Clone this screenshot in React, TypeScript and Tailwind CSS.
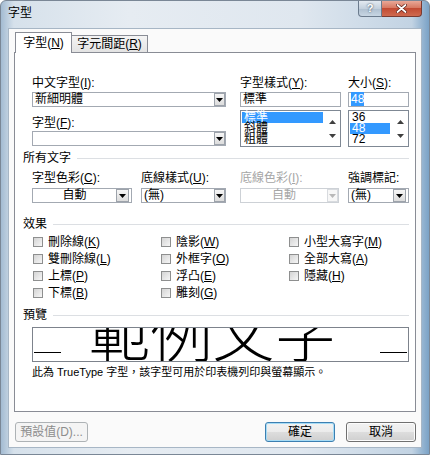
import React from 'react';

const Arrow = ({ color = '#000', up = false }: { color?: string; up?: boolean }) => (
  <svg width="7" height="4" viewBox="0 0 7 4">
    <path d={up ? 'M0 4h7L3.5 0z' : 'M0 0h7L3.5 4z'} fill={color} />
  </svg>
);

const Acc = ({ text, k, colon = true }: { text: string; k?: string; colon?: boolean }) => (
  <span>
    {text}
    {k && (
      <>
        (<span className="underline underline-offset-1">{k}</span>)
      </>
    )}
    {colon ? ':' : ''}
  </span>
);

interface ComboProps {
  value?: React.ReactNode;
  center?: boolean;
  disabled?: boolean;
  wide?: boolean;
  className?: string;
}

const Combo: React.FC<ComboProps> = ({ value, center, disabled, wide, className = '' }) => (
  <div
    className={`flex h-[15px] border bg-white ${
      disabled ? 'border-[#cdd1d6]' : 'border-[#a3a9b2]'
    } ${className}`}
  >
    <div
      className={`flex-1 px-[2px] text-[12px] leading-[13px] whitespace-nowrap ${center ? 'text-center' : ''} ${
        disabled ? 'text-[#a6a6a6]' : 'text-black'
      }`}
    >
      {value}
    </div>
    <div
      className={`${wide ? 'w-[13px] mr-[2px]' : 'w-[11px]'} flex items-center justify-center border ${
        disabled
          ? 'border-[#d8dbdf] bg-[#f7f7f7]'
          : 'border-[#9da3ab] bg-[linear-gradient(180deg,#f6f6f6,#dcdcdc)]'
      }`}
    >
      <Arrow color={disabled ? '#b9b9b9' : '#000'} />
    </div>
  </div>
);

const ListBox = ({ items, selected, itemWidth }: { items: string[]; selected: number; itemWidth: string }) => (
  <div className="mt-[3px] flex h-[37px] border border-[#7f8894] bg-white">
    <div className="flex-1 pt-[1px] pl-[1px]">
      {items.map((it, i) => (
        <div
          key={it}
          className={`${itemWidth} h-[11px] pl-[2px] text-[12px] leading-[11px] ${
            i === selected ? 'bg-[#3399ff] text-white' : 'text-black'
          }`}
        >
          {it}
        </div>
      ))}
    </div>
    <div className="flex w-[16px] flex-col items-center justify-between pt-[9px] pb-[8px]">
      <Arrow color="#404040" up />
      <Arrow color="#404040" />
    </div>
  </div>
);

const Section = ({ title, className = '' }: { title: string; className?: string }) => (
  <div className={`flex items-center gap-[6px] text-[12px] leading-[14px] ${className}`}>
    <span>{title}</span>
    <div className="h-px flex-1 bg-[#dcdfe3]" />
  </div>
);

const Check = ({ label, k }: { label: string; k: string }) => (
  <div className="flex h-[17px] items-center gap-[5px] text-[12px] leading-[14px]">
    <div className="h-[10px] w-[10px] border border-[#8e8f8f] bg-[linear-gradient(135deg,#d4d4d4,#f6f6f6)]" />
    <Acc text={label} k={k} colon={false} />
  </div>
);

export default function App() {
  return (
    <div className="flex h-[455px] w-[430px] flex-col overflow-hidden rounded-t-[6px] border border-[#7a8796] bg-[linear-gradient(90deg,#a3bbd2_0%,#d6e1eb_3%,#e6ecf2_30%,#dfe7ef_70%,#c2d3e3_96%,#7aa2c6_100%)] font-['Liberation_Sans','Noto_Sans_CJK_TC',sans-serif] text-black">
      {/* title bar */}
      <div className="flex h-[27px] shrink-0 items-start">
        <div className="ml-[7px] mt-[5px] text-[12px] leading-[14px]">字型</div>
        <div className="flex-1" />
        <div className="mr-[7px] flex">
          <div className="flex h-[16px] w-[24px] items-center justify-center rounded-bl-[4px] border border-t-0 border-[#6b7b8d] bg-[linear-gradient(180deg,#e3eaf1,#c3d0dd_50%,#aebfd0_51%,#c8d6e3)] text-[11px] font-bold leading-none text-white [text-shadow:0_0_2px_#1d2e40]">
            ?
          </div>
          <div className="flex h-[16px] w-[40px] items-center justify-center rounded-br-[4px] border border-l-0 border-t-0 border-[#7a3a30] bg-[linear-gradient(180deg,#e9a897,#d77962_45%,#c24b33_50%,#cf6a4f)]">
            <svg width="11" height="9" viewBox="0 0 11 9">
              <path d="M1.5 1l8 7M9.5 1l-8 7" stroke="#5a1c12" strokeWidth="3.2" strokeLinecap="round" />
              <path d="M1.5 1l8 7M9.5 1l-8 7" stroke="#fff" strokeWidth="1.8" strokeLinecap="round" />
            </svg>
          </div>
        </div>
      </div>

      {/* client area */}
      <div className="mx-[7px] mb-[6px] flex flex-1 flex-col border border-[#a7b6c5] bg-[#fafafa] px-[5px] pb-[5px] pt-[3px]">
        {/* tabs */}
        <div className="relative z-10 -mb-px flex h-[21px] items-end pl-px">
          <div className="flex h-[21px] w-[57px] justify-center border border-b-0 border-[#898c95] bg-white pt-[3px] text-[12px] leading-[14px]">
            <Acc text="字型" k="N" colon={false} />
          </div>
          <div className="-ml-px mb-px flex h-[17px] w-[77px] justify-center border border-b-0 border-[#898c95] bg-[linear-gradient(180deg,#f4f4f4,#e3e3e3)] pt-[1px] text-[12px] leading-[14px]">
            <Acc text="字元間距" k="R" colon={false} />
          </div>
        </div>

        {/* panel */}
        <div className="flex h-[360px] flex-col border border-[#898c95] bg-white pl-[8px] pr-[6px] pt-[23px]">
          <div className="flex pl-[9px]">
            <div className="w-[194px]">
              <div className="text-[12px] leading-[14px]">
                <Acc text="中文字型" k="I" />
              </div>
              <Combo className="mt-[2px]" value="新細明體" />
              <div className="mt-[9px] text-[12px] leading-[14px]">
                <Acc text="字型" k="F" />
              </div>
              <Combo className="mt-px" value="" />
            </div>
            <div className="ml-[14px] w-[101px]">
              <div className="text-[12px] leading-[14px]">
                <Acc text="字型樣式" k="Y" />
              </div>
              <div className="mt-[2px] h-[15px] border border-[#a3a9b2] px-[2px] text-[12px] leading-[13px]">標準</div>
              <ListBox items={['標準', '斜體', '粗體']} selected={0} itemWidth="w-[81px]" />
            </div>
            <div className="ml-[7px] w-[61px]">
              <div className="text-[12px] leading-[14px]">
                <Acc text="大小" k="S" />
              </div>
              <div className="mt-[2px] h-[15px] border border-[#a3a9b2] px-[2px] text-[12px] leading-[13px]">
                <span className="bg-[#3399ff] text-white">48</span>
              </div>
              <ListBox items={['36', '48', '72']} selected={1} itemWidth="w-[40px]" />
            </div>
          </div>

          <Section title="所有文字" className="mt-[4px]" />
          <div className="mt-[6px] flex pl-[9px] text-[12px] leading-[14px]">
            <div className="w-[109px]">
              <Acc text="字型色彩" k="C" />
            </div>
            <div className="w-[99px]">
              <Acc text="底線樣式" k="U" />
            </div>
            <div className="w-[108px] text-[#a6a6a6]">
              <Acc text="底線色彩" k="I" />
            </div>
            <div>強調標記:</div>
          </div>
          <div className="mt-[3px] flex pl-[9px]">
            <Combo className="w-[100px]" value="自動" center wide />
            <Combo className="ml-[9px] w-[85px]" value="(無)" />
            <Combo className="ml-[14px] w-[99px]" value="自動" center disabled />
            <Combo className="ml-[9px] w-[61px]" value="(無)" wide />
          </div>

          <Section title="效果" className="mt-[14px]" />
          <div className="mt-[2px] grid grid-cols-[128px_128px_1fr] pl-[10px]">
            <Check label="刪除線" k="K" />
            <Check label="陰影" k="W" />
            <Check label="小型大寫字" k="M" />
            <Check label="雙刪除線" k="L" />
            <Check label="外框字" k="O" />
            <Check label="全部大寫" k="A" />
            <Check label="上標" k="P" />
            <Check label="浮凸" k="E" />
            <Check label="隱藏" k="H" />
            <Check label="下標" k="B" />
            <Check label="雕刻" k="G" />
          </div>

          <Section title="預覽" className="mt-[7px]" />
          <div className="ml-[9px] mt-[5px] flex h-[35px] overflow-hidden border border-[#7d838c] bg-white px-px">
            <div className="mt-[24px] h-px w-[27px] bg-black" />
            <div className="-mt-[29px] flex-1 whitespace-nowrap pr-[16px] text-center font-['Noto_Sans_CJK_TC',sans-serif] text-[62px] font-extralight leading-[62px]">
              範例文字
            </div>
            <div className="mt-[24px] h-px w-[27px] bg-black" />
          </div>
          <div className="ml-[9px] mt-[3px] text-[11px] leading-[14px]">
            此為 TrueType 字型，該字型可用於印表機列印與螢幕顯示。
          </div>
        </div>

        {/* buttons */}
        <div className="mt-[10px] flex pl-px">
          <button className="h-[20px] w-[73px] rounded-[3px] border border-[#adb2b5] bg-[#f4f4f4] text-[12px] leading-none text-[#8d8d8d]">
            預設值(D)...
          </button>
          <div className="flex-1" />
          <button className="h-[20px] w-[70px] rounded-[3px] border border-[#3c7fb1] bg-[linear-gradient(180deg,#f2f2f2_0%,#ebebeb_50%,#dddddd_51%,#cfcfcf_100%)] text-[12px] leading-none shadow-[inset_0_0_0_1px_#a6dcf6]">
            確定
          </button>
          <button className="ml-[11px] h-[20px] w-[70px] rounded-[3px] border border-[#707070] bg-[linear-gradient(180deg,#f2f2f2_0%,#ebebeb_50%,#dddddd_51%,#cfcfcf_100%)] text-[12px] leading-none shadow-[inset_0_0_0_1px_#fcfcfc]">
            取消
          </button>
        </div>
      </div>
    </div>
  );
}
